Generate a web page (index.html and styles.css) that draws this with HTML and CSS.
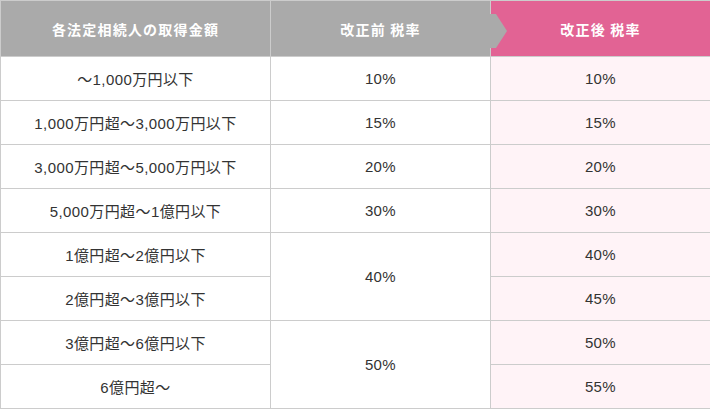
FILE: index.html
```html
<!DOCTYPE html>
<html lang="ja">
<head>
<meta charset="utf-8">
<link rel="stylesheet" href="styles.css">
</head>
<body>
<table class="rate-table">
  <colgroup>
    <col class="c1">
    <col class="c2">
    <col class="c3">
  </colgroup>
  <thead>
    <tr>
      <th class="h-gray">各法定相続人の取得金額</th>
      <th class="h-gray h-before">改正前 税率<svg class="arrow" width="18" height="34" viewBox="0 0 18 34"><polygon points="0,0 6,0 17,17 6,34 0,34" fill="#aaaaaa"/></svg></th>
      <th class="h-pink">改正後 税率</th>
    </tr>
  </thead>
  <tbody>
    <tr><td>～1,000万円以下</td><td>10%</td><td class="new">10%</td></tr>
    <tr><td>1,000万円超～3,000万円以下</td><td>15%</td><td class="new">15%</td></tr>
    <tr><td>3,000万円超～5,000万円以下</td><td>20%</td><td class="new">20%</td></tr>
    <tr><td>5,000万円超～1億円以下</td><td>30%</td><td class="new">30%</td></tr>
    <tr><td>1億円超～2億円以下</td><td rowspan="2">40%</td><td class="new">40%</td></tr>
    <tr><td>2億円超～3億円以下</td><td class="new">45%</td></tr>
    <tr><td>3億円超～6億円以下</td><td rowspan="2">50%</td><td class="new">50%</td></tr>
    <tr><td>6億円超～</td><td class="new">55%</td></tr>
  </tbody>
</table>
</body>
</html>
```
FILE: styles.css
```css
html, body {
  margin: 0;
  padding: 0;
  background: #ffffff;
}
.rate-table {
  width: 710px;
  border-collapse: collapse;
  table-layout: fixed;
  font-family: "Liberation Sans", "Noto Sans CJK JP", sans-serif;
  font-size: 15px;
  color: #333333;
}
.c1 { width: 270px; }
.c2 { width: 220px; }
.c3 { width: 220px; }
.rate-table th,
.rate-table td {
  border: 1px solid #cccccc;
  text-align: center;
  vertical-align: middle;
  padding: 0;
}
.rate-table th {
  height: 55px;
  color: #ffffff;
  font-family: "Noto Sans CJK JP", sans-serif;
  font-weight: bold;
  font-size: 14px;
  letter-spacing: 1.2px;
}
.h-gray { background: #aaaaaa; }
.h-pink { background: #e26394; }
.h-before { position: relative; }
.arrow {
  position: absolute;
  right: -18px;
  top: 13px;
  z-index: 2;
}
.rate-table td {
  height: 43px;
  letter-spacing: 0.4px;
}
.rate-table td.new {
  background: #fff3f7;
}
```
